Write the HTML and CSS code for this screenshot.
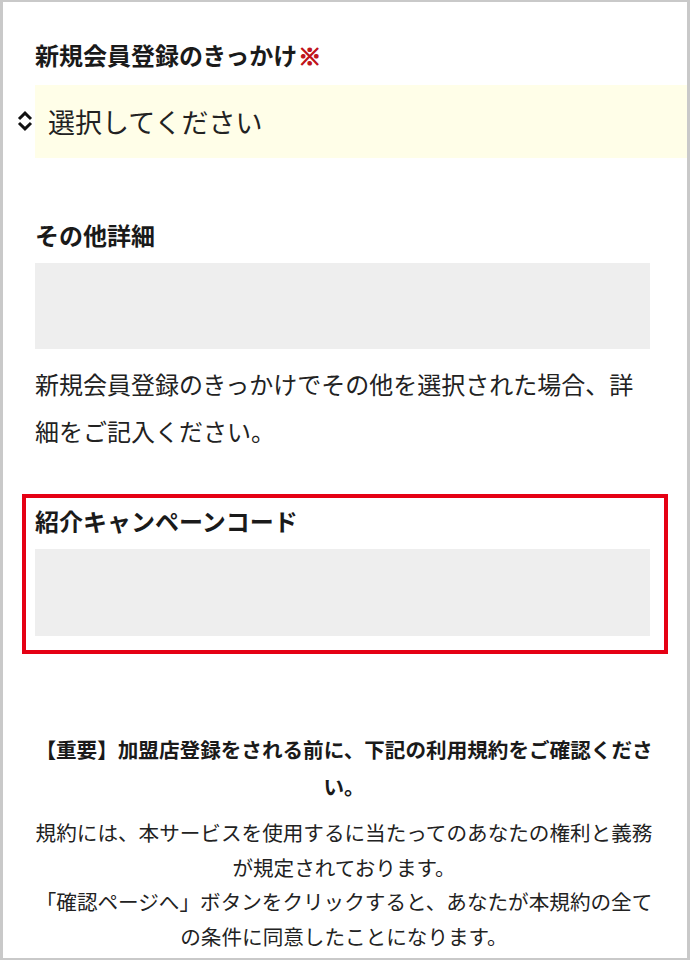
FILE: index.html
```html
<!DOCTYPE html>
<html lang="ja">

<head>
    <meta charset="UTF-8">
    <meta name="viewport" content="width=device-width, initial-scale=1.0">
    <title>新規会員登録</title>
    <link rel="stylesheet" href="styles.css">
</head>

<body>
    <div class="page">
        <div class="field">
            <label class="label">新規会員登録のきっかけ<span class="required">※</span></label>
            <div class="select">
                <svg class="select-arrow" viewBox="0 0 16 20">
                    <path d="M2 8L8 2.2L14 8" />
                    <path d="M2 12L8 17.8L14 12" />
                </svg>
                <span class="select-text">選択してください</span>
            </div>
        </div>

        <div class="field field-other">
            <label class="label">その他詳細</label>
            <div class="input"></div>
            <p class="help">新規会員登録のきっかけでその他を選択された場合、詳細をご記入ください。</p>
        </div>

        <div class="field field-highlight">
            <label class="label">紹介キャンペーンコード</label>
            <div class="input"></div>
        </div>

        <div class="notice">
            <p class="notice-title">【重要】加盟店登録をされる前に、下記の利用規約をご確認ください。</p>
            <p class="notice-body">規約には、本サービスを使用するに当たってのあなたの権利と義務が規定されております。<br>「確認ページへ」ボタンをクリックすると、あなたが本規約の全ての条件に同意したことになります。</p>
        </div>
    </div>
</body>

</html>
```

FILE: styles.css
```css
body,
html {
    margin: 0;
    padding: 0;
    background-color: #ffffff;
    font-family: "Noto Sans CJK JP", "Noto Sans", sans-serif;
    color: #1a1a1a;
}

.page {
    box-sizing: border-box;
    width: 690px;
    height: 960px;
    overflow: hidden;
    border-style: solid;
    border-color: #c9c9c9;
    border-width: 2px 3px;
    padding: 36px 37px 0 32px;
}

.label {
    display: block;
    font-size: 24px;
    font-weight: 700;
    line-height: 34px;
}

.required {
    color: #c0141b;
    font-size: 23px;
    font-weight: 900;
    margin-left: 1px;
    -webkit-text-stroke: 1.2px #c0141b;
}

.select {
    position: relative;
    display: flex;
    align-items: center;
    height: 73px;
    margin-top: 13px;
    margin-right: -37px;
    padding-left: 13px;
    background-color: #fffee8;
}

.select-arrow {
    position: absolute;
    left: -18px;
    top: 26px;
    width: 16px;
    height: 20px;
    fill: none;
    stroke: #111111;
    stroke-width: 3;
}

.select-text {
    font-size: 27px;
    color: #222222;
}

.field-other {
    margin-top: 60px;
}

.input {
    height: 86px;
    margin-top: 11px;
    background-color: #eeeeee;
}

.help {
    margin: 11px 0 0;
    font-size: 24px;
    line-height: 47px;
    color: #222222;
}

.field-highlight {
    margin: 40px -18px 0 -13px;
    padding: 6px 14px 14px 9px;
    border: 4px solid #e50014;
}

.field-highlight .input {
    height: 87px;
}

.notice {
    margin: 77px -8px 0 -5px;
    text-align: center;
    font-size: 20.6px;
}

.notice-title {
    margin: 0;
    font-weight: 700;
    line-height: 37px;
}

.notice-body {
    margin: 10px 0 0;
    line-height: 34.5px;
    color: #222222;
}
```
